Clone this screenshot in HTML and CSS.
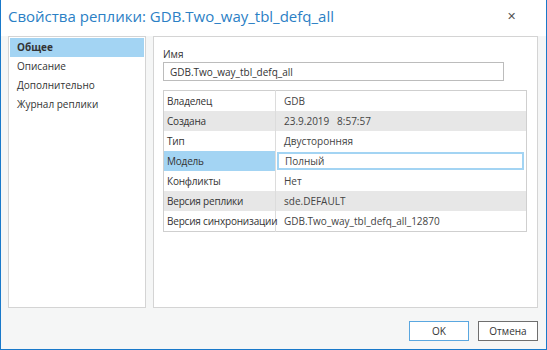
FILE: index.html
```html
<!DOCTYPE html>
<html lang="ru">
<head>
    <meta charset="UTF-8">
    <title>Свойства реплики</title>
    <link rel="stylesheet" href="styles.css">
</head>
<body>
    <div class="dialog">
        <div class="title-bar">
            <h1>Свойства реплики: GDB.Two_way_tbl_defq_all</h1>
            <span class="close">&#x2715;</span>
        </div>

        <div class="content">
            <ul class="nav">
                <li class="active">Общее</li>
                <li>Описание</li>
                <li>Дополнительно</li>
                <li>Журнал реплики</li>
            </ul>

            <div class="panel">
                <label class="field-label">Имя</label>
                <input class="name-input" type="text" value="GDB.Two_way_tbl_defq_all">

                <table class="props">
                    <tr>
                        <td class="key">Владелец</td>
                        <td class="val">GDB</td>
                    </tr>
                    <tr class="shaded">
                        <td class="key">Создана</td>
                        <td class="val">23.9.2019 &nbsp; 8:57:57</td>
                    </tr>
                    <tr>
                        <td class="key">Тип</td>
                        <td class="val">Двусторонняя</td>
                    </tr>
                    <tr class="selected">
                        <td class="key">Модель</td>
                        <td class="val"><div class="edit">Полный</div></td>
                    </tr>
                    <tr>
                        <td class="key">Конфликты</td>
                        <td class="val">Нет</td>
                    </tr>
                    <tr class="shaded">
                        <td class="key">Версия реплики</td>
                        <td class="val">sde.DEFAULT</td>
                    </tr>
                    <tr>
                        <td class="key">Версия синхронизации</td>
                        <td class="val">GDB.Two_way_tbl_defq_all_12870</td>
                    </tr>
                </table>
            </div>
        </div>

        <div class="footer">
            <button class="btn primary">OK</button>
            <button class="btn">Отмена</button>
        </div>
    </div>
</body>
</html>
```

FILE: styles.css
```css
html, body {
    margin: 0;
    padding: 0;
}

body {
    font-family: 'Open Sans', 'Noto Sans', Arial, sans-serif;
    font-size: 10px;
    color: #333;
    background-color: #f5f6f6;
}

.dialog {
    width: 545px;
    height: 349px;
    border: 1px solid #1979ca;
    border-top: none;
    background-color: #f5f6f6;
    display: flex;
    flex-direction: column;
}

.title-bar {
    height: 36px;
    display: flex;
    align-items: center;
    justify-content: space-between;
    padding: 0 30px 0 7px;
    background-color: #ffffff;
    box-sizing: border-box;
}

.title-bar h1 {
    margin: 0 0 4px 0;
    font-size: 15px;
    font-weight: normal;
    color: #2b80c5;
}

.close {
    font-size: 11px;
    color: #555;
    margin-bottom: 6px;
}

.content {
    display: flex;
    gap: 7px;
    padding: 0 8px 0 7px;
    height: 272px;
}

.nav {
    list-style: none;
    margin: 0;
    padding: 1px;
    width: 136px;
    background-color: white;
    border: 1px solid #d4d4d4;
}

.nav li {
    height: 19px;
    line-height: 18px;
    padding-left: 7px;
    color: #333;
}

.nav li.active {
    background-color: #a3d4f3;
    font-weight: bold;
}

.panel {
    flex: 1;
    background-color: white;
    border: 1px solid #d4d4d4;
    padding: 9px 10px 0 9px;
}

.field-label {
    display: block;
    height: 15px;
    line-height: 14px;
    margin-top: 1px;
}

.name-input {
    display: block;
    width: 341px;
    height: 19px;
    box-sizing: border-box;
    padding: 0 6px;
    border: 1px solid #bcbcbc;
    font-family: inherit;
    font-size: 10px;
    color: #333;
}

.props {
    margin-top: 9px;
    width: 364px;
    table-layout: fixed;
    border-collapse: collapse;
    border: 1px solid #cfcfcf;
}

.props td {
    height: 20px;
    padding: 0;
    white-space: nowrap;
}

.props .key {
    width: 108px;
    padding-left: 3px;
    border-right: 1px solid #dcdcdc;
    letter-spacing: -0.2px;
    color: #333;
}

.props .val {
    padding-left: 8px;
    color: #444;
    overflow: hidden;
}

.props tr.shaded td {
    background-color: #e7e7e7;
}

.props tr.selected .key {
    background-color: #a3d4f3;
}

.props tr.selected .val {
    padding: 0 2px 0 1px;
}

.edit {
    height: 18px;
    line-height: 15px;
    box-sizing: border-box;
    border: 2px solid #a3d4f3;
    padding-left: 6px;
}

.footer {
    flex: 1;
    display: flex;
    justify-content: flex-end;
    align-items: flex-start;
    gap: 9px;
    padding: 13px 8px 0 0;
}

.btn {
    width: 60px;
    height: 20px;
    padding: 0;
    background-color: white;
    border: 1px solid #6f6f6f;
    font-family: inherit;
    font-size: 10px;
    color: #333;
}

.btn.primary {
    border-color: #5aa7e0;
}
```
